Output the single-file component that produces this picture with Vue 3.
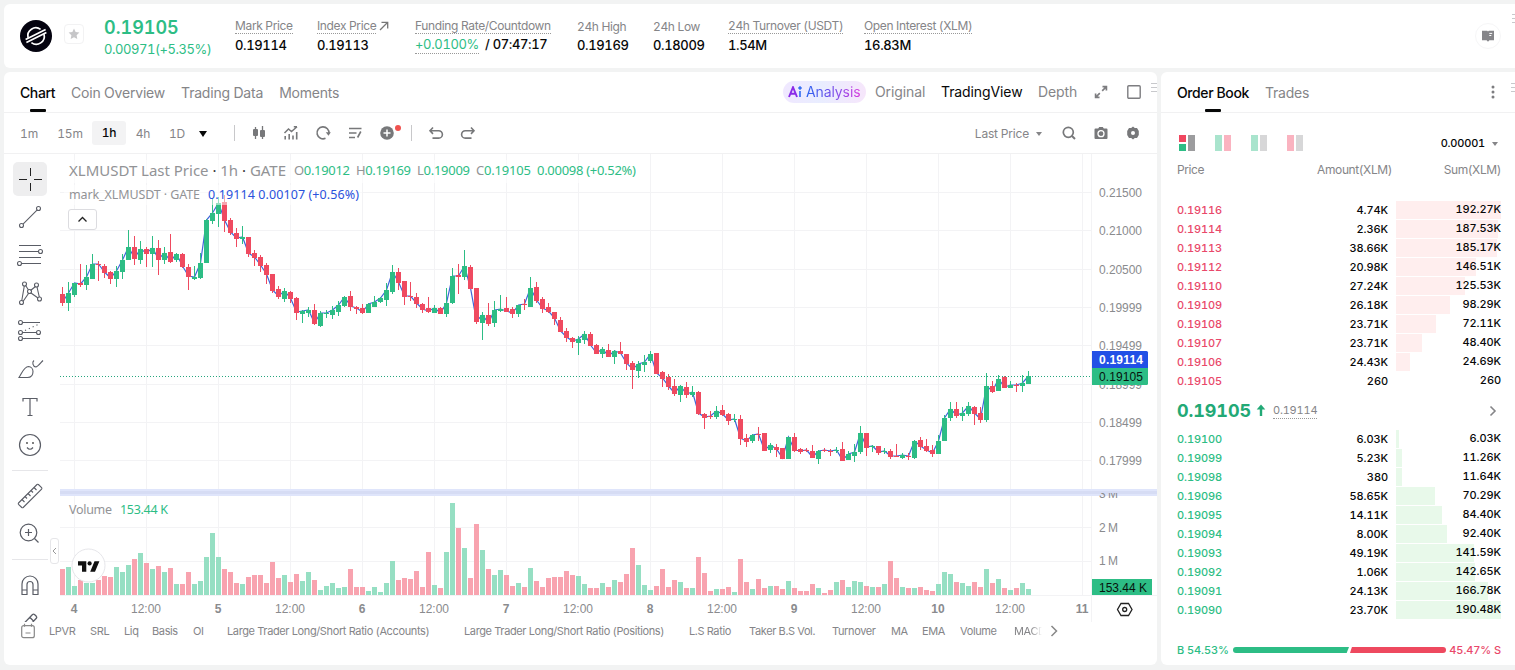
<script setup>
import { computed } from 'vue';

const stats = [
  { label: 'Mark Price', value: '0.19114', width: 82, dotted: true },
  { label: 'Index Price', value: '0.19113', width: 98, dotted: true, arrow: true },
  { label: 'Funding Rate/Countdown', rate: '+0.0100%', value: '/ 07:47:17', width: 162, dotted: true },
  { label: '24h High', value: '0.19169', width: 76 },
  { label: '24h Low', value: '0.18009', width: 75 },
  { label: '24h Turnover (USDT)', value: '1.54M', width: 136, dotted: true },
  { label: 'Open Interest (XLM)', value: '16.83M', width: 120, dotted: true }
];

const tabs = ['Chart', 'Coin Overview', 'Trading Data', 'Moments'];

const indicators = [
  'LPVR', 'SRL', 'Liq', 'Basis', 'OI',
  'Large Trader Long/Short Ratio (Accounts)',
  'Large Trader Long/Short Ratio (Positions)',
  'L.S Ratio', 'Taker B.S Vol.', 'Turnover', 'MA', 'EMA', 'Volume', 'MACD'
];

// price, amount, sum, depth (% of the widest row)
const asks = [
  ['0.19116', '4.74K', '192.27K', 100],
  ['0.19114', '2.36K', '187.53K', 97.5],
  ['0.19113', '38.66K', '185.17K', 96.3],
  ['0.19112', '20.98K', '146.51K', 76.2],
  ['0.19110', '27.24K', '125.53K', 65.3],
  ['0.19109', '26.18K', '98.29K', 51.1],
  ['0.19108', '23.71K', '72.11K', 37.8],
  ['0.19107', '23.71K', '48.40K', 25],
  ['0.19106', '24.43K', '24.69K', 13],
  ['0.19105', '260', '260', 0]
];
const bids = [
  ['0.19100', '6.03K', '6.03K', 3],
  ['0.19099', '5.23K', '11.26K', 5.8],
  ['0.19098', '380', '11.64K', 6],
  ['0.19096', '58.65K', '70.29K', 36.8],
  ['0.19095', '14.11K', '84.40K', 43.8],
  ['0.19094', '8.00K', '92.40K', 48.2],
  ['0.19093', '49.19K', '141.59K', 74.3],
  ['0.19092', '1.06K', '142.65K', 74.8],
  ['0.19091', '24.13K', '166.78K', 87.5],
  ['0.19090', '23.70K', '190.48K', 100]
];

// direction, high, body top, body bottom, low, volume height
const raw = `
R 287 294 303 306 26|G 282 293 303 311 28|G 283 283 295 297 9|R 264 283 285 287 15|G 265 277 285 290 12|G 254 264 279 279 12
R 261 264 265 281 15|R 264 266 273 278 19|R 271 272 279 284 18|G 266 271 279 287 28|G 254 260 272 279 23|G 230 247 260 260 30
R 236 247 259 265 36|G 241 249 260 264 42|R 247 249 254 267 32|G 236 248 254 267 26|R 240 248 260 275 29|G 247 253 260 264 23
R 234 252 262 263 27|G 253 254 260 262 11|R 253 254 267 268 11|R 264 267 277 290 23|G 266 277 279 280 11|G 253 263 278 279 14
G 219 220 263 263 38|G 198 213 221 224 62|G 197 203 214 227 38|R 195 202 221 232 26|R 218 220 233 235 23|R 228 233 239 247 12
G 226 237 239 244 11|R 237 237 254 257 18|R 250 253 258 266 20|R 255 257 266 272 20|R 263 265 275 284 12|R 274 274 291 293 33
R 286 289 297 299 17|G 288 291 299 302 20|R 291 292 299 303 13|R 297 298 313 320 21|G 310 311 314 323 14|G 307 310 313 317 23
R 304 310 324 325 15|G 311 313 326 327 5|G 310 313 314 318 9|G 306 310 315 319 12|G 301 305 312 316 7|G 296 297 306 307 8
R 291 296 307 311 26|R 306 307 309 314 8|R 304 308 313 314 8|G 303 304 313 313 4|G 296 302 307 307 8|G 297 298 302 303 3
G 283 290 300 306 12|G 265 272 292 294 34|R 268 272 283 290 15|R 281 281 297 305 17|R 282 296 297 301 16|R 293 297 304 308 24
R 303 304 310 313 8|R 297 308 312 313 43|G 305 308 313 313 10|R 307 308 314 314 7|G 288 303 314 317 43|G 268 276 303 304 92
R 264 275 277 294 67|G 250 266 277 280 47|R 265 267 289 289 17|R 288 288 322 324 71|G 312 315 323 340 45|R 303 315 324 326 26
G 301 310 323 327 20|G 295 309 311 312 25|R 297 308 312 312 20|R 307 309 314 318 9|G 305 305 314 317 12|R 299 304 305 310 8
G 277 288 307 307 27|R 282 287 301 303 14|R 297 299 309 313 8|R 303 307 312 313 17|R 312 312 319 325 18|R 317 320 332 332 18
R 328 331 338 342 24|R 337 338 342 348 20|G 336 339 343 355 19|G 331 334 340 344 11|R 332 334 346 346 7|R 344 345 354 354 7
G 347 349 354 358 12|R 344 350 357 357 8|G 350 351 357 364 15|R 342 351 354 354 13|R 354 354 364 370 21|R 361 363 370 389 47
G 361 364 371 378 30|G 355 362 365 372 10|G 351 354 361 363 5|R 353 353 374 374 9|R 371 372 379 387 26|R 374 377 387 390 8
R 379 386 394 396 15|G 385 386 395 402 13|R 382 387 395 398 7|G 386 392 395 397 7|R 391 392 414 415 38|R 413 414 418 429 22
R 411 416 417 419 4|G 406 411 417 419 6|R 405 410 415 416 6|R 413 414 421 425 8|G 414 419 420 422 3|R 415 419 439 445 36
R 434 438 442 447 13|G 434 435 441 443 6|R 427 434 435 441 16|R 433 433 451 451 7|G 443 445 450 453 9|R 444 447 450 457 9
R 448 448 459 459 6|G 437 437 459 459 14|R 433 437 451 452 7|R 448 449 452 454 4|R 448 450 451 452 4|R 445 451 458 458 11
G 450 451 459 464 7|R 448 450 451 452 2|R 449 451 452 456 5|G 447 450 451 453 13|R 442 449 461 461 15|G 451 454 460 460 8
G 444 452 456 462 14|G 426 433 452 454 13|R 433 433 448 456 9|G 445 446 447 452 8|R 446 446 453 455 8|G 448 451 452 454 11
R 449 451 457 459 34|R 444 456 457 457 17|G 453 455 458 459 8|R 453 456 457 460 7|G 440 441 458 459 7|R 437 440 447 450 8
R 439 446 451 452 5|R 445 450 454 457 4|G 435 441 454 454 11|G 415 418 441 441 23|G 402 409 418 421 21|R 402 409 416 418 13
G 407 413 416 421 12|G 402 406 414 416 9|R 406 407 414 425 13|R 407 413 420 423 8|G 373 386 420 422 26|R 381 386 392 393 12
G 375 379 391 391 16|R 376 377 388 388 7|G 381 385 388 388 5|R 383 385 386 392 7|G 375 383 386 392 12|G 371 376 384 384 6`;

const candles = raw.trim().split(/[|\n]/).map((row, i) => {
  const [dir, ...n] = row.split(' ');
  const [high, top, bottom, low, vol] = n.map(Number);
  return { x: 60 + i * 6, up: dir === 'G', high, top, bottom, low, vol };
});

const markLine = computed(() =>
  candles.map((c) => `${c.x + 2.5},${c.up ? c.top : c.bottom - 1}`).join(' ')
);

const priceTicks = [
  ['0.21500', 192], ['0.21000', 230], ['0.20500', 269], ['0.19999', 307],
  ['0.19499', 345], ['0.18999', 384], ['0.18499', 422], ['0.17999', 460]
];
const timeTicks = ['4', '12:00', '5', '12:00', '6', '12:00', '7', '12:00', '8', '12:00', '9', '12:00', '10', '12:00', '11']
  .map((label, i) => ({ label, x: 74 + i * 72, bold: i % 2 === 0 }));
</script>

<template>
  <div class="page">
    <header class="panel ticker">
      <svg class="coin" viewBox="0 0 32 32">
        <circle cx="16" cy="16" r="16" fill="#04030f" />
        <g fill="none" stroke="#fff" stroke-width="1.7">
          <path d="M8.1 17.8A8 8 0 0 1 20.6 9.400" />
          <path d="M24 14.2A8 8 0 0 1 11.4 22.6" />
          <path d="M5.600 19.6L25.6 9.400M6.400 22.6L26.4 12.4" />
        </g>
      </svg>
      <div class="star">
        <svg width="12" height="12" viewBox="0 0 12 12"><path d="M6 .6l1.6 3.5 3.8.5-2.8 2.6.7 3.9L6 9.2l-3.3 1.9.7-3.9L.6 4.6l3.8-.5z" fill="#c6c6c8" /></svg>
      </div>
      <div class="last">
        <div class="last-price">0.19105</div>
        <div class="last-change">0.00971(+5.35%)</div>
      </div>
      <div class="stats">
        <div v-for="s in stats" :key="s.label" class="stat" :style="{ width: `${s.width}px` }">
          <div class="stat-label">
            <span :class="{ dotted: s.dotted }">{{ s.label }}</span>
            <svg v-if="s.arrow" width="10" height="10" viewBox="0 0 10 10"><path d="M1 9L8.5 1.5M2.5 1.3h6.2v6.2" fill="none" stroke="#777" stroke-width="1.3" /></svg>
          </div>
          <div class="stat-value" :class="{ funding: s.rate }">
            <span v-if="s.rate" class="rate">{{ s.rate }}</span>{{ s.value }}
          </div>
        </div>
      </div>
      <div class="guide">
        <svg width="12" height="12" viewBox="0 0 12 12"><path d="M0 .8h5.2l.8.6.8-.6H12v9.4H7.4L6 11.8l-1.4-1.6H0z" fill="#858589" /><path d="M7.3 3.4h2.9M7.3 5.5h2" stroke="#fff" stroke-width="1" /></svg>
      </div>
      <div class="grip header-grip"></div>
    </header>

    <div class="columns">
      <section class="panel chart-panel">
        <div class="bar tabs">
          <span v-for="(t, i) in tabs" :key="t" class="tab" :class="{ active: i === 0 }">{{ t }}</span>
          <div class="views">
            <span class="ai">
              <svg width="15" height="12" viewBox="0 0 15 12">
                <path d="M1 11L5 1.2 9 11M2.6 7.8h4.8" fill="none" stroke="#8a2be8" stroke-width="1.9" />
                <path d="M12 5v6M12 .2v3.6M10.2 2h3.6" fill="none" stroke="#2f6bf2" stroke-width="1.6" />
              </svg>
              <b>Analysis</b>
            </span>
            <span class="view original">Original</span>
            <span class="view tv">TradingView</span>
            <span class="view depth">Depth</span>
            <svg class="expand" width="14" height="14" viewBox="0 0 14 14"><g fill="none" stroke="#7d7d80" stroke-width="1.7"><path d="M8.5 1.6h3.9v3.9M12 2L8.2 5.8M5.5 12.4H1.6V8.5M2 12l3.8-3.8" /></g></svg>
            <svg width="14" height="14" viewBox="0 0 14 14"><rect x=".8" y=".8" width="12.4" height="12.4" rx="1" fill="none" stroke="#7d7d80" stroke-width="1.4" /></svg>
          </div>
          <div class="grip chart-grip"></div>
        </div>

        <div class="bar tools">
          <span class="frame f1m">1m</span>
          <span class="frame f15m">15m</span>
          <span class="frame selected">1h</span>
          <span class="frame f4h">4h</span>
          <span class="frame f1d">1D</span>
          <i class="caret"></i>
          <i class="divider"></i>
          <div class="tool-icons">
            <svg viewBox="0 0 16 16"><path d="M4.5 2v12M11.5 1v13" stroke="#77787a" stroke-width="1.3" /><rect x="2" y="4" width="5" height="7" rx="1" fill="#77787a" /><rect x="9" y="5" width="5" height="7" rx="1" fill="#77787a" /></svg>
            <svg viewBox="0 0 16 16"><g fill="none" stroke="#77787a" stroke-width="1.5"><path d="M1.5 8l4-4 3 2.5L14 1.8M10.8 1.8H14" /><path d="M2.2 11v3.5M6.2 9v5.500M10 10.500v4M13.700 7v7.500" stroke-width="1.600" /></g></svg>
            <svg viewBox="0 0 16 16"><path d="M10.500 13.300A6 6 0 1 1 14 8.500" fill="none" stroke="#77787a" stroke-width="1.600" /><path d="M10.800 7.300h5l-2.300 3.400z" fill="#77787a" /></svg>
            <svg viewBox="0 0 16 16"><path d="M2 3.500h12.500M2 8h7.500M2 12.500h6M13.800 6.500l-3.200 6" fill="none" stroke="#77787a" stroke-width="1.600" /></svg>
            <svg viewBox="0 0 16 16"><circle cx="8" cy="8" r="6.800" fill="#77787a" /><path d="M8 4.500v7M4.500 8h7" stroke="#fff" stroke-width="1.500" /></svg>
            <i class="badge"></i>
          </div>
          <i class="divider"></i>
          <div class="history">
            <svg viewBox="0 0 16 16"><path d="M5 1.500L2 4.700 5 7.900M2.500 4.700h8.200a3.700 3.700 0 0 1 0 7.400H4.500" transform="translate(0 1)" fill="none" stroke="#77787a" stroke-width="1.600" /></svg>
            <svg viewBox="0 0 16 16"><path d="M11 1.500l3 3.200-3 3.200M13.500 4.700H5.300a3.700 3.700 0 0 0 0 7.400h6.200" transform="translate(0 1)" fill="none" stroke="#77787a" stroke-width="1.600" /></svg>
          </div>
          <div class="right-tools">
            <span class="price-type">Last Price</span>
            <i class="caret small"></i>
            <svg viewBox="0 0 16 16"><circle cx="7.300" cy="7.300" r="5" fill="none" stroke="#77787a" stroke-width="1.700" /><path d="M11 11l3 3" stroke="#77787a" stroke-width="1.900" /></svg>
            <svg viewBox="0 0 16 16"><path d="M2.500 3.500h2.700l1-1.500h3.600l1 1.500h2.700q1 0 1 1V13q0 1-1 1h-11q-1 0-1-1V4.500q0-1 1-1z" fill="#77787a" /><circle cx="8" cy="8.700" r="3" fill="none" stroke="#fff" stroke-width="1.300" /></svg>
            <svg viewBox="0 0 16 16"><path d="M8 1.600l1.800 1.300 2.200.2 1.800 3v3.800l-1.800 3-2.200.2L8 14.400l-1.800-1.300-2.200-.2-1.800-3V6.100l1.800-3 2.200-.2z" fill="#77787a" /><circle cx="8" cy="8" r="2" fill="#fff" /></svg>
          </div>
        </div>

        <div class="chart-body">
          <nav class="drawing">
            <div class="draw active"><svg viewBox="0 0 28 28"><path d="M14.500 3v8M14.500 18v8M3 14.500h8M18 14.500h8" stroke="#222" stroke-width="1" shape-rendering="crispEdges" /></svg></div>
            <div class="draw"><svg viewBox="0 0 28 28"><g fill="none" stroke="#5a5d66" stroke-width="1.100"><path d="M7 21.200L21 7.200" /><circle cx="5.500" cy="22.500" r="2" /><circle cx="22.500" cy="5.500" r="2" /></g></svg></div>
            <div class="draw"><svg viewBox="0 0 28 28"><g fill="none" stroke="#5a5d66" stroke-width="1.100"><path d="M3 4.500h22M3 10.500h19.500M3 16.500h22M6 22.500h19" /><circle cx="24.500" cy="10.500" r="2" /><circle cx="3.500" cy="22.500" r="2" /></g></svg></div>
            <div class="draw"><svg viewBox="0 0 28 28"><g fill="none" stroke="#5a5d66" stroke-width="1.100"><path d="M5.700 22L8.300 7M9.800 6.800l2.700 4.200M14.500 11.500L19.200 7.700M21 8l2.300 10M7 22.500l5.500-8M15 14l7 5" /><circle cx="8.500" cy="5" r="2" /><circle cx="20.500" cy="6" r="2" /><circle cx="13.500" cy="12.500" r="2" /><circle cx="23.500" cy="20" r="2" /><circle cx="5.500" cy="23.500" r="2" /></g></svg></div>
            <div class="draw"><svg viewBox="0 0 28 28"><g fill="none" stroke="#5a5d66" stroke-width="1.100"><path d="M6.500 5.500H24M6.500 15.500h14M6.500 21.500H24" /><path d="M9 13.500L23 7" stroke-dasharray="1.200 3" /><circle cx="4.500" cy="5.500" r="2" /><circle cx="4.500" cy="15.500" r="2" /><circle cx="22.500" cy="15.500" r="2" /><circle cx="4.500" cy="21.500" r="2" /></g></svg></div>
            <div class="draw"><svg viewBox="0 0 28 28"><g fill="none" stroke="#5a5d66" stroke-width="1.100"><path d="M3 22.500C6 18 8 11.500 12.500 11.500a5 5 0 0 1 4.500 5c0 3.500-2 6-5.500 6zM18 5.500c-2 1.500-1.500 6 2 6.500 2-.5 5-4.500 7-6.500" /></g></svg></div>
            <div class="draw"><svg viewBox="0 0 28 28"><path d="M7 8.500V5.500h14v3M14 5.500v17M11.500 22.500h5" fill="none" stroke="#5a5d66" stroke-width="1.200" /></svg></div>
            <div class="draw"><svg viewBox="0 0 28 28"><circle cx="14" cy="14" r="10.500" fill="none" stroke="#5a5d66" stroke-width="1.200" /><circle cx="11" cy="12" r=".9" fill="#444" /><circle cx="17" cy="12" r=".9" fill="#444" /><path d="M11 16.500q3 3.500 6 0" fill="none" stroke="#5a5d66" stroke-width="1.200" /></svg></div>
            <i class="rule"></i>
            <div class="draw"><svg viewBox="0 0 28 28"><g fill="none" stroke="#5a5d66" stroke-width="1.100"><path d="M2.500 21L21 2.500q.7-.5 1.400 0l3.200 3.200q.6.700 0 1.400L7.200 25.500q-.7.500-1.400 0l-3.300-3.200q-.5-.6 0-1.300z" /><path d="M6 17.500l2.500 2.500M9 14.500l2 2M12 11.500l2.500 2.500M15 8.500l2 2M18 5.500l2.500 2.500" /></g></svg></div>
            <div class="draw"><svg viewBox="0 0 28 28"><g fill="none" stroke="#5a5d66" stroke-width="1.200"><circle cx="12.500" cy="12.500" r="8.300" /><path d="M18.500 18.500l4 4M12.500 9v7M9 12.500h7" /></g></svg></div>
            <i class="rule"></i>
            <div class="draw"><svg viewBox="0 0 28 28"><path d="M6 23.500V13a8 8 0 0 1 16 0v10.500h-5V13.500a3 3 0 0 0-6 0v10zM6 19h5M17 19h5" fill="none" stroke="#5a5d66" stroke-width="1.200" /></svg></div>
            <div class="draw"><svg viewBox="0 0 28 28"><path d="M5 17.500L16.500 5.500q1-.8 2 0l1.800 1.800q.8 1 0 2L12 18M14 8.500l3.500 3.500M8 17.500l3-3M18.500 17q1.500-1.500 3 0" fill="none" stroke="#5a5d66" stroke-width="1.300" /></svg></div>
            <div class="collapse"><svg width="5" height="8" viewBox="0 0 5 8"><path d="M4 1L1 4l3 3" fill="none" stroke="#999" /></svg></div>
          </nav>

          <svg class="chart" width="1097" height="468" viewBox="60 154 1097 468">
            <defs>
              <clipPath id="below-separator"><rect x="1092" y="493" width="65" height="12" /></clipPath>
            </defs>
            <g class="grid">
              <path v-for="t in timeTicks" :key="t.x" :d="`M${t.x + 0.5} 154V595`" />
              <path v-for="t in priceTicks" :key="t[1]" :d="`M60 ${t[1] + 0.5}H1091`" />
              <path d="M60 527.500H1091M60 561.500H1091M60 595.500H1157M1091.500 154V623" />
            </g>
            <path d="M60 376.500H1091" stroke="#26a67e" stroke-dasharray="1 2" />

            <g shape-rendering="crispEdges">
              <rect
                v-for="c in candles" :key="c.x"
                :class="c.up ? 'vol-up' : 'vol-down'"
                :x="c.x" :y="595 - c.vol" width="5" :height="c.vol"
              />
            </g>
            <polyline class="mark-line" :points="markLine" />
            <g v-for="c in candles" :key="c.x" :class="c.up ? 'up' : 'down'" shape-rendering="crispEdges">
              <rect :x="c.x + 2" :y="c.high" width="1" :height="c.low - c.high" />
              <rect :x="c.x" :y="c.top" width="5" :height="c.bottom - c.top" />
            </g>

            <rect x="64" y="160" width="575" height="23" fill="#fff" opacity=".6" />
            <rect x="64" y="185" width="298" height="20" fill="#fff" opacity=".5" />
            <g class="legend">
              <text x="69" y="176" textLength="217" font-size="15">XLMUSDT Last Price <tspan class="dot">·</tspan> 1h <tspan class="dot">·</tspan> GATE</text>
              <text x="294" y="175" textLength="56" font-size="13">O<tspan class="pos">0.19012</tspan></text>
              <text x="356" y="175" textLength="55" font-size="13">H<tspan class="pos">0.19169</tspan></text>
              <text x="417" y="175" textLength="53" font-size="13">L<tspan class="pos">0.19009</tspan></text>
              <text x="476" y="175" textLength="55" font-size="13">C<tspan class="pos">0.19105</tspan></text>
              <text x="537" y="175" textLength="99" font-size="13" class="pos">0.00098 (+0.52%)</text>
              <text x="69" y="199" textLength="131" font-size="12.500">mark_XLMUSDT · GATE</text>
              <text x="208" y="199" textLength="151" font-size="12.500" class="mark">0.19114 0.00107 (+0.56%)</text>
              <text x="69" y="514" textLength="43" font-size="12.500">Volume</text>
              <text x="120" y="514" textLength="48" font-size="12.500" class="pos">153.44 K</text>
            </g>
            <rect x="68.500" y="209.500" width="28" height="20" rx="2.500" fill="#fff" stroke="#dcdce0" />
            <path d="M78.500 221.500l4-4 4 4" fill="none" stroke="#222" stroke-width="1.300" />

            <g class="axis">
              <text v-for="t in priceTicks" :key="t[1]" x="1099" :y="t[1] + 5" textLength="43">{{ t[0] }}</text>
              <text x="1099" y="532" textLength="19">2 M</text>
              <text x="1099" y="565" textLength="19">1 M</text>
              <text v-for="t in timeTicks" :key="t.x" :x="t.x" y="613" text-anchor="middle" :class="{ bold: t.bold }">{{ t.label }}</text>
            </g>
            <rect x="60" y="489" width="1097" height="7" fill="#dfe5fb" />
            <rect x="60" y="491" width="1097" height="3" fill="#d6dcf4" />
            <text class="axis" x="1099" y="498" textLength="19" clip-path="url(#below-separator)">3 M</text>
            <path d="M1092 351h54.500q1.500 0 1.500 1.500V368h-56z" fill="#2250e6" />
            <path d="M1092 368h56v15.500q0 1.500-1.500 1.500H1092z" fill="#2dbd85" />
            <rect x="1092" y="579" width="60" height="16" fill="#2dbd85" />
            <g class="tags">
              <text x="1099" y="364" textLength="44" fill="#fff" class="bold">0.19114</text>
              <text x="1099" y="381" textLength="44" fill="#07130d">0.19105</text>
              <text x="1099" y="592" textLength="48" fill="#07130d">153.44 K</text>
            </g>
            <g fill="none" stroke="#222" stroke-width="1.300"><path d="M1121 603.500h7.500l3.500 6-3.500 6h-7.500l-3.500-6z" /><circle cx="1124.700" cy="609.500" r="2" /></g>

            <circle cx="88.500" cy="565.500" r="16.500" fill="#fff" stroke="#e6e6ea" />
            <path d="M78 561.300h8.300v10.400h-4.300v-6.200h-4zM94.500 561.300h4.900L95 571.700h-4.800z" fill="#111" />
            <circle cx="89.600" cy="563.400" r="2.100" fill="#111" />
          </svg>
        </div>

        <div class="indicators">
          <svg class="calendar" width="16" height="16" viewBox="0 0 16 16"><rect x="1.700" y="2.700" width="12.600" height="12" rx="2" fill="none" stroke="#888" stroke-width="1.200" /><path d="M4.500.8v3M11.500.8v3M5.500 10h5" stroke="#888" stroke-width="1.200" /></svg>
          <span v-for="name in indicators" :key="name" class="indicator">{{ name }}</span>
          <svg class="next" width="8" height="12" viewBox="0 0 8 12"><path d="M1.500 1l5 5-5 5" fill="none" stroke="#888" stroke-width="1.500" /></svg>
        </div>
      </section>

      <section class="panel book">
        <div class="bar tabs">
          <span class="tab active">Order Book</span>
          <span class="tab">Trades</span>
          <svg class="more" width="4" height="14" viewBox="0 0 4 14"><g fill="#7d7d80"><circle cx="2" cy="2" r="1.500" /><circle cx="2" cy="7" r="1.500" /><circle cx="2" cy="12" r="1.500" /></g></svg>
          <div class="grip book-grip"></div>
        </div>
        <div class="modes">
          <svg width="16" height="16" viewBox="0 0 16 16"><rect width="7" height="7" fill="#f0465f" /><rect y="9" width="7" height="7" fill="#2dbd85" /><rect x="9" width="7" height="16" fill="#9c9c9e" /></svg>
          <svg width="16" height="16" viewBox="0 0 16 16"><rect width="7" height="16" fill="#a9e4cd" /><rect x="9" width="7" height="16" fill="#fab3c0" /></svg>
          <svg width="16" height="16" viewBox="0 0 16 16"><rect width="7" height="16" fill="#a9e4cd" /><rect x="9" width="7" height="16" fill="#d7d7d8" /></svg>
          <svg width="16" height="16" viewBox="0 0 16 16"><rect width="7" height="16" fill="#fab3c0" /><rect x="9" width="7" height="16" fill="#d7d7d8" /></svg>
          <span class="step">0.00001</span>
          <i class="caret small"></i>
        </div>
        <div class="book-head"><span>Price</span><span>Amount(XLM)</span><span>Sum(XLM)</span></div>

        <div class="rows asks">
          <div v-for="r in asks" :key="r[0]" class="row">
            <span class="price">{{ r[0] }}</span>
            <span class="amount">{{ r[1] }}</span>
            <span class="sum"><i class="depth-bar" :style="{ width: `${r[3]}%` }"></i><em>{{ r[2] }}</em></span>
          </div>
        </div>
        <div class="current">
          <span class="current-price">0.19105</span>
          <svg width="10" height="13" viewBox="0 0 10 13"><path d="M5 .5l4.300 5H6.200V12H3.800V5.500H.7z" fill="#22a976" /></svg>
          <span class="current-mark">0.19114</span>
          <svg class="go" width="8" height="12" viewBox="0 0 8 12"><path d="M1.500 1.500L6 6l-4.500 4.500" fill="none" stroke="#858588" stroke-width="1.600" /></svg>
        </div>
        <div class="rows bids">
          <div v-for="r in bids" :key="r[0]" class="row">
            <span class="price">{{ r[0] }}</span>
            <span class="amount">{{ r[1] }}</span>
            <span class="sum"><i class="depth-bar" :style="{ width: `${r[3]}%` }"></i><em>{{ r[2] }}</em></span>
          </div>
        </div>
        <div class="ratio">
          <span class="buy">B 54.53%</span>
          <i class="buy-bar"></i><i class="sell-bar"></i>
          <span class="sell">45.47% S</span>
        </div>
      </section>
    </div>
  </div>
</template>

<style>
body {
  background: #f2f3f3;
  overflow: hidden;
}
</style>

<style scoped>
.page {
  width: 1515px;
  height: 670px;
  box-sizing: border-box;
  padding: 4px 0 0 4px;
  display: flex;
  flex-direction: column;
  gap: 4px;
  overflow: hidden;
  font-family: Inter, "Liberation Sans", sans-serif;
  font-variant-numeric: tabular-nums;
  color: #070808;
}

.panel {
  background: #fff;
  border-radius: 6px;
  position: relative;
}

svg {
  display: block;
  flex: none;
}

.ticker {
  height: 64px;
  display: flex;
  align-items: center;
  border-radius: 6px 0 0 6px;
}

.coin {
  width: 32px;
  height: 32px;
  margin-left: 16px;
}

.star {
  width: 18px;
  height: 18px;
  margin: -4px 0 0 12px;
  border: 1px solid #f2f2f3;
  border-radius: 4px;
  display: flex;
  align-items: center;
  justify-content: center;
}

.last {
  width: 131px;
  margin: 4px 0 0 20px;
  color: #2dbd85;
}

.last-price {
  font-size: 18px;
  line-height: 22px;
  font-weight: 600;
}

.last-change {
  font-size: 13px;
  line-height: 20px;
  letter-spacing: -0.45px;
}

.stats {
  display: flex;
  margin-top: -1px;
}

.stat-label {
  display: flex;
  gap: 3px;
  align-items: center;
  height: 16px;
  font-size: 12px;
  line-height: 15px;
  letter-spacing: -0.35px;
  color: #858588;
  white-space: nowrap;
}

.stat-value {
  height: 16px;
  font-size: 13px;
  line-height: 16px;
  letter-spacing: -0.35px;
  margin-top: 3px;
  font-weight: 500;
  white-space: nowrap;
}

.stat-value.funding {
  margin-top: 2px;
}

.dotted {
  border-bottom: 1px dotted #999;
}

.rate {
  color: #2dbd85;
  font-weight: 400;
  margin-right: 6px;
  padding-bottom: 1px;
  border-bottom: 1px dotted #999;
}

.guide {
  margin-left: auto;
  margin-right: 14px;
  width: 24px;
  height: 24px;
  border: 1px solid #f6f6f7;
  border-radius: 50%;
  display: flex;
  align-items: center;
  justify-content: center;
}

.grip {
  position: absolute;
  width: 6px;
  height: 10px;
  background: repeating-linear-gradient(#c8c9cc 0 1px, transparent 1px 4px);
}

.header-grip {
  right: -3px;
  top: 10px;
}

.chart-grip {
  right: 0;
  top: 11px;
}

.book-grip {
  right: -2px;
  top: 11px;
}

.columns {
  display: flex;
  gap: 4px;
}

.chart-panel {
  width: 1153px;
  height: 593px;
}

.bar {
  height: 40px;
  display: flex;
  align-items: center;
  border-bottom: 1px solid #f1f1f2;
}

.tabs {
  gap: 16px;
  padding-left: 16px;
  font-size: 14px;
  color: #858588;
}

.tab {
  position: relative;
  line-height: 41px;
  height: 40px;
  white-space: nowrap;
  letter-spacing: -0.2px;
}

.tab.active {
  color: #070808;
  font-weight: 500;
  letter-spacing: -0.4px;
}

.tab.active::after {
  content: "";
  position: absolute;
  left: 50%;
  bottom: 0;
  width: 16px;
  height: 3px;
  margin-left: -8px;
  background: #070808;
  border-radius: 1px;
}

.views {
  margin-left: auto;
  padding-right: 16px;
  display: flex;
  align-items: center;
  letter-spacing: -0.1px;
}

.view,
.ai b {
  position: relative;
  top: -0.5px;
}

.ai {
  box-sizing: border-box;
  width: 83px;
  height: 22px;
  margin-right: 9px;
  padding-left: 5px;
  display: flex;
  align-items: center;
  gap: 3px;
  border-radius: 11px;
  background: linear-gradient(90deg, #f0e8ff, #e9edff 45%, #f6e6fb);
}

.ai b {
  font-weight: 400;
  background: linear-gradient(90deg, #2a62f0, #8a4be8 60%, #d93bdc);
  background-clip: text;
  color: transparent;
}

.original {
  width: 66px;
}

.tv {
  width: 97px;
  color: #070808;
}

.depth {
  width: 56px;
}

.expand {
  margin-right: 19px;
}

.tools {
  font-size: 12px;
  letter-spacing: -0.2px;
  color: #858588;
}

.tools .frame {
  text-align: center;
}

.f1m {
  width: 34px;
  margin-left: 8px;
}

.f15m {
  width: 34px;
  margin-left: 7px;
}

.tools .selected {
  width: 34px;
  line-height: 24px;
  margin-left: 5px;
  background: #f3f3f4;
  border-radius: 3px;
  color: #070808;
  font-weight: 500;
}

.f4h {
  width: 34px;
}

.f1d {
  width: 34px;
}

.caret {
  border: 4px solid transparent;
  border-top: 6px solid #070808;
  border-bottom: 0;
  margin: 1px 0 0 5px;
}

.caret.small {
  border-width: 4px 3px 0;
  border-top-color: #858588;
  margin-left: 7px;
}

.divider {
  width: 1px;
  height: 16px;
  background: #c8c8ca;
}

.caret + .divider {
  margin-left: 27px;
}

.tool-icons {
  position: relative;
  display: flex;
  gap: 16px;
  margin: 0 16px;
}

.tools svg {
  width: 16px;
  height: 16px;
}

.badge {
  position: absolute;
  top: 0;
  right: -6px;
  width: 6px;
  height: 6px;
  border-radius: 50%;
  background: #f0524f;
}

.history {
  display: flex;
  gap: 16px;
  margin-left: 16px;
}

.right-tools {
  margin-left: auto;
  margin-right: 16px;
  display: flex;
  align-items: center;
}

.right-tools svg {
  margin-left: 16px;
}

.right-tools .caret + svg {
  margin-left: 19px;
}

.chart-body {
  display: flex;
  height: 468px;
}

.drawing {
  position: relative;
  width: 56px;
  height: 468px;
  display: flex;
  flex-direction: column;
  gap: 4px;
  padding: 8px 0 0 9px;
  box-sizing: border-box;
  overflow: hidden;
}

.draw {
  flex: none;
  width: 34px;
  height: 34px;
  display: flex;
  align-items: center;
  justify-content: center;
  border-radius: 5px;
}

.draw.active {
  background: #eeeeef;
}

.draw svg {
  width: 28px;
  height: 28px;
}

.rule {
  flex: none;
  width: 36px;
  height: 1px;
  margin: 4px 0 4px -1px;
  background: #e6e6e9;
}

.collapse {
  position: absolute;
  left: 46px;
  top: 384px;
  width: 7px;
  height: 24px;
  border: 1px solid #e6e6e9;
  border-radius: 3px;
  display: flex;
  align-items: center;
  justify-content: center;
}

.grid path {
  stroke: #f3f3f5;
}

.vol-up {
  fill: #96dfc3;
}

.vol-down {
  fill: #f8a3af;
}

.up {
  fill: #2dbd85;
}

.down {
  fill: #ef4a60;
}

.mark-line {
  fill: none;
  stroke: #3f66d8;
  stroke-width: 1.2;
}

.legend {
  font-family: "Noto Sans", sans-serif;
  fill: #929396;
}

.legend .dot {
  fill: #333;
}

.legend .pos {
  fill: #2dbd85;
}

.legend .mark {
  fill: #2a52dc;
}

.axis,
.tags {
  font-family: "Liberation Sans", sans-serif;
  font-size: 12px;
}

.axis {
  fill: #8a8b8e;
}

.bold {
  font-weight: 700;
}

.indicators {
  height: 18px;
  display: grid;
  grid-template-columns: 29px 41px 34px 28px 41px 34px 237px 225px 60px 83px 59px 31px 38px 54px 28px 20px;
  padding-left: 16px;
  align-items: center;
  font-size: 11px;
  color: #858588;
}

.indicator {
  white-space: nowrap;
  overflow: hidden;
  letter-spacing: -0.37px;
}

.indicator:nth-last-child(2) {
  -webkit-mask-image: linear-gradient(90deg, #000 60%, transparent);
  mask-image: linear-gradient(90deg, #000 60%, transparent);
}

.next {
  margin-left: 8px;
}

.book {
  flex: 1;
  height: 593px;
  border-radius: 6px 0 0 6px;
}

.more {
  margin-left: auto;
  margin-right: 20px;
}

.modes {
  display: flex;
  align-items: center;
  gap: 20px;
  height: 16px;
  padding: 22px 17px 0 18px;
}

.step {
  margin-left: auto;
  font-size: 11px;
  font-weight: 500;
  letter-spacing: -0.2px;
}

.modes .caret {
  margin-left: -13px;
}

.book-head {
  display: grid;
  grid-template-columns: 100px 115px 109px;
  padding: 10px 0 0 16px;
  font-size: 12px;
  line-height: 17px;
  height: 16px;
  letter-spacing: -0.4px;
  color: #858588;
}

.book-head span + span {
  text-align: right;
}

.rows {
  padding-left: 16px;
}

.asks {
  margin-top: 24px;
}

.row {
  display: grid;
  grid-template-columns: 100px 111px 105px;
  column-gap: 0;
  height: 19px;
  line-height: 19px;
  font-size: 11px;
  letter-spacing: -0.08px;
}

.price {
  font-weight: 500;
}

.amount,
.sum {
  text-align: right;
  font-weight: 500;
}

.sum {
  position: relative;
  margin-left: 8px;
  width: 105px;
}

.sum em {
  position: relative;
  top: -1px;
  font-style: normal;
}

.depth-bar {
  position: absolute;
  left: 0;
  top: 0;
  height: 18px;
}

.asks .price {
  color: #e9486a;
}

.asks .depth-bar {
  background: #ffeeee;
}

.bids .price {
  color: #2dbd85;
}

.bids .depth-bar {
  background: #e8f9ea;
}

.current {
  display: flex;
  align-items: center;
  height: 39px;
  padding-left: 16px;
}

.current-price {
  width: 79px;
  font-size: 18px;
  font-weight: 700;
  letter-spacing: -0.1px;
  color: #22a976;
}

.current-mark {
  margin-left: 7px;
  font-size: 11px;
  line-height: 15px;
  letter-spacing: -0.2px;
  color: #858588;
  border-bottom: 1px dotted #999;
}

.go {
  margin-left: auto;
  margin-right: 18px;
}

.ratio {
  display: flex;
  align-items: center;
  margin-top: 21px;
  padding: 0 14px 0 16px;
  height: 18px;
  font-size: 11px;
  font-weight: 500;
  letter-spacing: -0.1px;
  white-space: nowrap;
}

.buy {
  width: 56px;
  color: #2dbd85;
}

.buy-bar {
  width: 116px;
  height: 6px;
  background: #2dbd85;
  border-radius: 3px 0 0 3px;
  clip-path: polygon(0 0, 100% 0, 98% 100%, 0 100%);
}

.sell-bar {
  width: 96px;
  height: 6px;
  margin-left: 1px;
  background: #ee495f;
  border-radius: 0 3px 3px 0;
  clip-path: polygon(2% 0, 100% 0, 100% 100%, 0 100%);
}

.sell {
  margin-left: auto;
  color: #e9486a;
}
</style>
